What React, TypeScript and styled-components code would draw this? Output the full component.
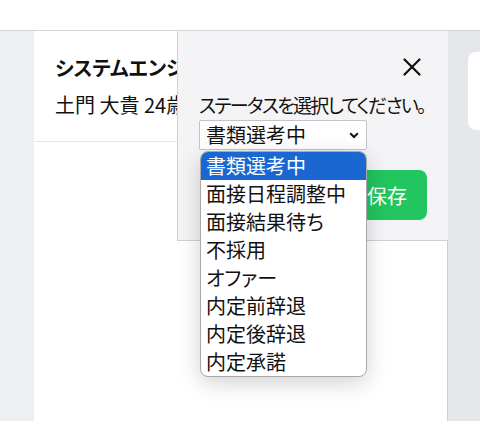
import { FC } from "react";
import styled, { createGlobalStyle } from "styled-components";

const GlobalStyle = createGlobalStyle`
  * {
    box-sizing: border-box;
  }
  body {
    margin: 0;
    background: #ffffff;
    color: #111111;
    font-family: "Noto Sans CJK JP", "Noto Sans", sans-serif;
    font-feature-settings: "palt";
  }
`;

const Page = styled.div`
  width: 480px;
  height: 421px;
  overflow: hidden;
  display: flex;
  flex-direction: column;
`;

const TopBar = styled.div`
  height: 31px;
  flex-shrink: 0;
  background: #ffffff;
  border-bottom: 1px solid #d3d5da;
`;

const Main = styled.div`
  flex: 1;
  display: flex;
  background: #eeeff2;
`;

const Gutter = styled.div<{ $width: number; $bg: string }>`
  width: ${(p) => p.$width}px;
  flex-shrink: 0;
  background: ${(p) => p.$bg};
`;

const Panel = styled.div`
  position: relative;
  width: 414px;
  flex-shrink: 0;
  background: #ffffff;
  border-right: 1px solid #cdcfd4;
`;

const Header = styled.div`
  padding: 23px 21px 22px;
  border-bottom: 1px solid #e5e7eb;
  white-space: nowrap;
  overflow: hidden;
`;

const Title = styled.div`
  font-size: 20px;
  line-height: 28px;
  font-weight: 700;
  margin-bottom: 9px;
`;

const Sub = styled.div`
  font-size: 20px;
  line-height: 28px;
`;

const RightSide = styled.div`
  flex: 1;
  background: #e6e7ea;
  padding: 21px 0 0 20px;
`;

const SideCard = styled.div`
  height: 78px;
  background: #ffffff;
  border-radius: 8px 0 0 8px;
`;

const Popover = styled.div`
  position: absolute;
  top: 0;
  left: 143px;
  width: 271px;
  background: #f4f4f6;
  border-left: 1px solid #cfd1d6;
  border-bottom: 1px solid #cfd1d6;
  padding: 27px 21px 20px 21px;
  display: flex;
  flex-direction: column;
`;

const CloseRow = styled.div`
  display: flex;
  justify-content: flex-end;
  padding-right: 6px;
`;

const CloseButton = styled.button`
  border: none;
  background: transparent;
  padding: 0;
  width: 18px;
  height: 18px;
  cursor: pointer;
  color: #111111;
  display: flex;
`;

const Label = styled.div`
  margin-top: 15px;
  font-size: 19px;
  letter-spacing: -1.7px;
  line-height: 28px;
  white-space: nowrap;
`;

const SelectWrap = styled.div`
  position: relative;
  width: 168px;
  margin-top: 1px;
`;

const Select = styled.select`
  appearance: none;
  width: 100%;
  height: 30px;
  border: 1px solid #c3c4c7;
  border-radius: 2px;
  background: #ffffff;
  color: #111111;
  font-family: inherit;
  font-feature-settings: "palt";
  font-size: 20px;
  line-height: 28px;
  padding: 0 0 0 6px;
  outline: none;
`;

const Chevron = styled.svg`
  position: absolute;
  right: 8px;
  top: 12px;
  pointer-events: none;
`;

const Options = styled.ul`
  position: absolute;
  top: 31px;
  left: 1px;
  width: 167px;
  margin: 0;
  padding: 0;
  list-style: none;
  background: #ffffff;
  border: 1px solid #a8a8a8;
  border-radius: 8px;
  overflow: hidden;
  box-shadow: 0 6px 22px rgba(0, 0, 0, 0.18);
  z-index: 2;
`;

const Option = styled.li<{ $active?: boolean }>`
  height: 28px;
  font-size: 20px;
  line-height: 28px;
  padding-left: 5px;
  white-space: nowrap;
  background: ${(p) => (p.$active ? "#1a67d2" : "transparent")};
  color: ${(p) => (p.$active ? "#ffffff" : "#111111")};
`;

const SaveRow = styled.div`
  display: flex;
  justify-content: flex-end;
  margin-top: 20px;
`;

const SaveButton = styled.button`
  height: 50px;
  padding: 0 20px;
  border: none;
  border-radius: 8px;
  background: #22c55e;
  color: #ffffff;
  font-family: inherit;
  font-size: 20px;
  cursor: pointer;
`;

const statuses = [
  "書類選考中",
  "面接日程調整中",
  "面接結果待ち",
  "不採用",
  "オファー",
  "内定前辞退",
  "内定後辞退",
  "内定承諾",
];

const App: FC = () => {
  return (
    <>
      <GlobalStyle />
      <Page>
        <TopBar />
        <Main>
          <Gutter $width={34} $bg="#eeeff2" />
          <Panel>
            <Header>
              <Title>システムエンジニア</Title>
              <Sub>土門 大貴 24歳</Sub>
            </Header>
            <Popover>
              <CloseRow>
                <CloseButton aria-label="閉じる">
                  <svg width="18" height="18" viewBox="0 0 18 18">
                    <path
                      d="M1.5 1.5 16.5 16.5 M16.5 1.5 1.5 16.5"
                      stroke="currentColor"
                      strokeWidth="2.2"
                      strokeLinecap="round"
                    />
                  </svg>
                </CloseButton>
              </CloseRow>
              <Label>ステータスを選択してください。</Label>
              <SelectWrap>
                <Select defaultValue={statuses[0]}>
                  {statuses.map((s) => (
                    <option key={s}>{s}</option>
                  ))}
                </Select>
                <Chevron width="10" height="7" viewBox="0 0 10 7">
                  <path
                    d="M1.2 1.2 5 5 8.8 1.2"
                    fill="none"
                    stroke="#111"
                    strokeWidth="2"
                  />
                </Chevron>
                <Options>
                  {statuses.map((s, i) => (
                    <Option key={s} $active={i === 0}>
                      {s}
                    </Option>
                  ))}
                </Options>
              </SelectWrap>
              <SaveRow>
                <SaveButton>保存</SaveButton>
              </SaveRow>
            </Popover>
          </Panel>
          <RightSide>
            <SideCard />
          </RightSide>
        </Main>
      </Page>
    </>
  );
};

export default App;
